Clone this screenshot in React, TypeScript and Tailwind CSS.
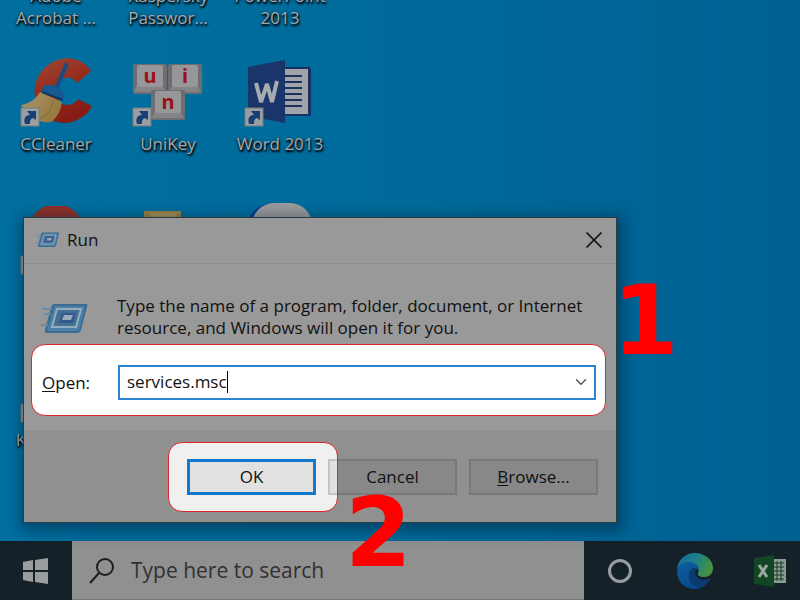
import React, { useState } from 'react';
import { ChevronDown, X } from 'lucide-react';

interface DesktopItem {
  id: string;
  label: string;
  icon?: React.ReactNode;
}

const ShortcutBadge: React.FC = () => (
  <g>
    <rect x="1" y="50" width="18" height="18" fill="#9a9fa3" stroke="#777c80" strokeWidth="1" />
    <path d="M5 66 C3 60 6 57 10 57 L7 53 H16 V62 L13 60 C10 61 10 63 10 66 Z" fill="#173f72" />
  </g>
);

const CCleanerIcon: React.FC = () => (
  <svg viewBox="0 0 72 72" className="w-[72px] h-[72px]" aria-hidden="true">
    <defs>
      <linearGradient id="cc-red" x1="0" y1="0" x2="0.4" y2="1">
        <stop offset="0" stopColor="#a04a38" />
        <stop offset="0.5" stopColor="#962c1c" />
        <stop offset="1" stopColor="#861c14" />
      </linearGradient>
      <linearGradient id="cc-brush" x1="0" y1="0" x2="1" y2="0.5">
        <stop offset="0" stopColor="#aa966c" />
        <stop offset="1" stopColor="#96793f" />
      </linearGradient>
    </defs>
    <path
      d="M71 13 C62 -1 44 -3 31 5 C16 14 11 31 17 46 C24 63 43 70 59 61 C65 58 69 54 72 48 L58 41 C52 50 41 48 37 41 C32 32 36 22 45 20 C51 19 54 21 57 25 Z"
      fill="url(#cc-red)"
    />
    <path d="M20 34 L42 44 C41 53 36 61 31 64 C20 66 9 59 1 47 C9 46 16 41 20 34 Z" fill="url(#cc-brush)" />
    <path d="M33 42 C32 52 27 58 20 61" fill="none" stroke="#7d683e" strokeWidth="1" />
    <path d="M45 5 C48 4 49 6 48 8 L38 32 L34 30 Z" fill="#174d80" />
    <path d="M24 28 C28 26 31 28 34 27 L40 31 C43 33 44 37 43 42 L21 34 Z" fill="#155a91" />
    <path d="M22 34 L43 42" stroke="#103a66" strokeWidth="2" />
    <ShortcutBadge />
  </svg>
);

const KeyCap: React.FC<{ x: number; y: number; letter: string }> = ({ x, y, letter }) => (
  <g>
    <rect x={x} y={y} width="34" height="30" rx="2" fill="#6c6e72" />
    <path d={`M${x + 1} ${y + 28} L${x + 4} ${y + 21} H${x + 29} L${x + 33} ${y + 28} Z`} fill="#858587" />
    <rect x={x + 4} y={y + 1} width="26" height="22" rx="2" fill="#97979a" />
    <text
      x={x + 17}
      y={y + 19}
      textAnchor="middle"
      fill="#9c1118"
      className="font-['Noto_Sans'] text-[20px] font-bold"
    >
      {letter}
    </text>
  </g>
);

const UniKeyIcon: React.FC = () => (
  <svg viewBox="0 0 72 72" className="w-[72px] h-[72px]" aria-hidden="true">
    <KeyCap x={1} y={6} letter="u" />
    <KeyCap x={36} y={6} letter="i" />
    <KeyCap x={19} y={32} letter="n" />
    <ShortcutBadge />
  </svg>
);

const WordIcon: React.FC = () => (
  <svg viewBox="0 0 72 72" className="w-[72px] h-[72px]" aria-hidden="true">
    <rect x="40" y="9" width="27" height="49" rx="2" fill="#1a3262" />
    <rect x="40" y="11" width="24" height="45" fill="#a0a3a8" />
    <path
      d="M40 18 H58 M40 24 H58 M40 30 H58 M40 36 H58 M40 42 H58 M40 48 H58"
      stroke="#1a3262"
      strokeWidth="2"
    />
    <path d="M4 9 L41 2 V65 L4 58 Z" fill="#1a3569" />
    <path d="M12 25 L17 44 L23 26 L28 44 L33 23" fill="none" stroke="#a8abb0" strokeWidth="4" strokeLinejoin="bevel" />
    <ShortcutBadge />
  </svg>
);

const RedAppIcon: React.FC = () => (
  <svg viewBox="0 0 72 72" className="w-[72px] h-[72px]" aria-hidden="true">
    <circle cx="36" cy="26" r="28" fill="#8c3028" />
    <ShortcutBadge />
  </svg>
);

const FolderIcon: React.FC = () => (
  <svg viewBox="0 0 72 72" className="w-[72px] h-[72px]" aria-hidden="true">
    <path d="M12 5 H49 V60 H12 Z" fill="#998344" />
    <path d="M18 7 H44 V12 H18 Z" fill="#a8925a" />
  </svg>
);

const WhiteAppIcon: React.FC = () => (
  <svg viewBox="0 0 72 72" className="w-[72px] h-[72px] overflow-visible" aria-hidden="true">
    <rect x="4" y="-2" width="60" height="60" rx="22" fill="#063a92" />
    <rect x="8" y="-3" width="60" height="60" rx="22" fill="#999a9c" />
  </svg>
);

const RunIcon: React.FC<{ className: string }> = ({ className }) => (
  <svg viewBox="0 0 48 34" className={className} aria-hidden="true">
    <path d="M13 3 H45 Q47 3 46 6 L40 29 Q39 32 36 32 H6 Q3 32 4 29 L10 6 Q11 3 13 3 Z" fill="#3d6c92" />
    <path d="M14 5 H44 L38 30 H6 Z" fill="#4e7fa6" />
    <path d="M16 8 H40 L35 26 H11 Z" fill="#466f94" stroke="#93aec0" strokeWidth="2" />
    <path d="M21 12 H35 L32 22 H18 Z" fill="#33588c" />
    <path d="M23 14 H32 L30 19 H21 Z" fill="#9aabbb" />
    <path d="M1 8 H11 M3 13 H10 M0 24 H7" stroke="#6b8ca5" strokeWidth="2" />
  </svg>
);

const WindowsLogo: React.FC = () => (
  <svg viewBox="0 0 26 26" className="w-[26px] h-[26px]" aria-hidden="true">
    <path
      d="M0 4 L10 2 V12 H0 Z M12 2 L25 0 V12 H12 Z M0 14 H10 V24 L0 22 Z M12 14 H25 V26 L12 24 Z"
      fill="#9a9d9e"
    />
  </svg>
);

const SearchGlyph: React.FC = () => (
  <svg viewBox="0 0 26 26" className="w-[26px] h-[26px] shrink-0" aria-hidden="true">
    <circle cx="16" cy="9" r="8" fill="none" stroke="#1d1d1d" strokeWidth="2" />
    <path d="M10 15 L1 25" stroke="#1d1d1d" strokeWidth="2" />
  </svg>
);

const EdgeIcon: React.FC = () => (
  <svg viewBox="0 0 36 36" className="w-9 h-9" aria-hidden="true">
    <defs>
      <linearGradient id="edge-top" x1="0" y1="0.2" x2="1" y2="0.5">
        <stop offset="0" stopColor="#12699a" />
        <stop offset="0.5" stopColor="#1f8087" />
        <stop offset="1" stopColor="#45933d" />
      </linearGradient>
      <linearGradient id="edge-left" x1="0" y1="0" x2="0.5" y2="1">
        <stop offset="0" stopColor="#0b5f9f" />
        <stop offset="1" stopColor="#084a8a" />
      </linearGradient>
    </defs>
    <path
      d="M0 16 C1 6 9 0 18 0 C28 0 36 7 36 15 C36 21 32 24 27 24 C22 24 20 22 21 20 C23 17 20 12 15 11 C9 10 3 12 0 16 Z"
      fill="url(#edge-top)"
    />
    <path
      d="M0 18 C1 12 7 9 13 9 C18 9 22 13 22 17 C17 13 12 17 12 23 C12 30 18 34 24 35 C11 39 0 31 0 18 Z"
      fill="url(#edge-left)"
    />
    <path
      d="M12 22 C12 17 16 14 19 16 C17 20 19 26 26 27 C29 27 32 26 34 25 C31 31 27 34 23 35 C17 34 12 29 12 22 Z"
      fill="#0b3c70"
    />
  </svg>
);

const ExcelIcon: React.FC = () => (
  <svg viewBox="0 0 32 32" className="w-8 h-8" aria-hidden="true">
    <rect x="18" y="4" width="14" height="24" fill="#8b9a90" />
    <path
      d="M20 8 H30 M20 12 H30 M20 16 H30 M20 20 H30 M20 24 H30 M23 6 V26 M27 6 V26"
      stroke="#143f25"
      strokeWidth="1"
    />
    <path d="M0 3 L20 0 V32 L0 29 Z" fill="#114524" />
    <path d="M5 10 L13 22 M13 10 L5 22" stroke="#9ba89f" strokeWidth="3" />
  </svg>
);

const desktopItems: DesktopItem[] = [
  { id: 'acrobat', label: 'Adobe Acrobat ...' },
  { id: 'kaspersky', label: 'Kaspersky Passwor...' },
  { id: 'powerpoint', label: 'PowerPoint 2013' },
  { id: 'ccleaner', label: 'CCleaner', icon: <CCleanerIcon /> },
  { id: 'unikey', label: 'UniKey', icon: <UniKeyIcon /> },
  { id: 'word', label: 'Word 2013', icon: <WordIcon /> },
  { id: 'red', label: '', icon: <RedAppIcon /> },
  { id: 'folder', label: '', icon: <FolderIcon /> },
  { id: 'white', label: '', icon: <WhiteAppIcon /> },
  {
    id: 'kaspersky-app',
    label: 'Kaspersky',
    icon: (
      <svg viewBox="0 0 72 72" className="w-[72px] h-[72px]" aria-hidden="true">
        <ShortcutBadge />
      </svg>
    ),
  },
];

const DesktopShortcut: React.FC<{ item: DesktopItem }> = ({ item }) => (
  <div className="h-[148px] flex flex-col items-center">
    <div className="w-[72px] h-[72px] shrink-0">{item.icon}</div>
    <span className="mt-[3px] w-24 text-center text-[17px] leading-[22px] font-medium text-[#a5a9ab] [text-shadow:1px_2px_2px_#000,0_1px_3px_#000]">
      {item.label}
    </span>
  </div>
);

const RunDialog: React.FC = () => {
  const [command, setCommand] = useState('services.msc');

  return (
    <section
      role="dialog"
      aria-labelledby="run-title"
      className="absolute left-[23px] top-[217px] w-[594px] border border-[#2c3a42] bg-[#999] text-[17px] leading-[22px] text-[#111] shadow-[2px_4px_14px_4px_rgba(0,25,45,0.45)]"
    >
      <header className="flex h-[46px] items-center border-b border-[#8e8e8e] pl-3 pr-[10px] pb-[2px]">
        <RunIcon className="h-[17px] w-6" />
        <h1 id="run-title" className="ml-[7px] flex-1">Run</h1>
        <button type="button" aria-label="Close" className="flex h-6 w-6 items-center justify-center">
          <X className="h-7 w-7 shrink-0" strokeWidth={1.5} />
        </button>
      </header>

      <div className="pb-[14px] pl-[7px] pr-[10px] pt-[31px]">
        <div className="flex items-start pl-[10px]">
          <RunIcon className="mt-[6px] h-[34px] w-12 shrink-0" />
          <p className="ml-7 whitespace-nowrap">
            Type the name of a program, folder, document, or Internet
            <br />
            resource, and Windows will open it for you.
          </p>
        </div>

        {/* Step 1 */}
        <div className="mt-[5px] flex h-[72px] items-center rounded-[14px] border border-[#e0262c] bg-white pl-[10px] pr-[9px]">
          <label htmlFor="run-command" className="mt-[5px] w-[76px]">
            <u className="underline-offset-2">O</u>pen:
          </label>
          <div className="mt-[5px] flex h-[35px] flex-1 items-center border-2 border-[#2f84d0] pb-[2px] pl-[7px] pr-1">
            <input
              id="run-command"
              type="text"
              value={command}
              onChange={(e) => setCommand(e.target.value)}
              className="field-sizing-content outline-none"
            />
            <span className="h-[22px] w-px bg-black" />
            <button type="button" aria-label="Show history" className="ml-auto">
              <ChevronDown className="h-[18px] w-[18px] text-[#555]" />
            </button>
          </div>
        </div>
      </div>

      <footer className="flex h-[92px] items-center justify-end gap-3 bg-[#909090] pr-[18px] pt-[2px]">
        <button type="button" className="order-2 h-9 w-[129px] border-2 border-[#797979] bg-[#888]">
          Cancel
        </button>
        <button type="button" className="order-3 h-9 w-[129px] border-2 border-[#797979] bg-[#888]">
          <u className="underline-offset-2">B</u>rowse...
        </button>
        {/* Step 2 */}
        <div className="relative order-1">
          <div className="absolute -inset-y-[17px] -left-[19px] -right-[22px] flex items-center justify-end overflow-hidden rounded-[14px] border border-[#e0262c] bg-[#f0f0f0]">
            <span className="h-9 w-[9px] border-y-2 border-l-2 border-[#c4c4c4] bg-[#e1e1e1]" />
          </div>
          <button type="button" className="relative h-9 w-[129px] border-3 border-[#1477d0] bg-[#e1e1e1]">
            OK
          </button>
        </div>
      </footer>
    </section>
  );
};

const Taskbar: React.FC = () => (
  <nav className="flex h-[59px] shrink-0 bg-[#142128]">
    <button type="button" aria-label="Start" className="flex w-18 items-center justify-center">
      <WindowsLogo />
    </button>
    <label className="flex w-[64%] items-center gap-4 border-b border-[#777] bg-[#909090] pl-[17px] pt-[2px]">
      <SearchGlyph />
      <input
        type="text"
        aria-label="Search"
        placeholder="Type here to search"
        className="min-w-0 flex-1 text-[21px] outline-none placeholder:text-[#303030]"
      />
    </label>
    <div className="flex flex-1 items-center justify-between pl-6 pr-[14px]">
      <button type="button" aria-label="Cortana">
        <span className="block h-6 w-6 rounded-full border-3 border-[#999d9f]" />
      </button>
      <button type="button" aria-label="Edge" className="ml-1">
        <EdgeIcon />
      </button>
      <button type="button" aria-label="Excel">
        <ExcelIcon />
      </button>
    </div>
  </nav>
);

const App: React.FC = () => (
  <div className="relative flex h-screen flex-col overflow-hidden bg-linear-to-r from-[#006fa0] via-[#006b9b] to-[#006092] font-['Open_Sans',sans-serif]">
    <main className="min-h-0 flex-1 overflow-hidden">
      <div className="-mt-[90px] grid grid-cols-[repeat(3,112px)]">
        {desktopItems.map((item) => (
          <DesktopShortcut key={item.id} item={item} />
        ))}
      </div>
      <RunDialog />
    </main>

    <Taskbar />

    {/* Step markers */}
    <span className="absolute left-[612px] top-[273px] font-['DejaVu_Sans'] text-8xl leading-none font-bold text-[#ff0000]">
      1
    </span>
    <span className="absolute left-[345px] top-[485px] font-['DejaVu_Sans'] text-8xl leading-none font-bold text-[#ff0000]">
      2
    </span>
  </div>
);

export default App;
